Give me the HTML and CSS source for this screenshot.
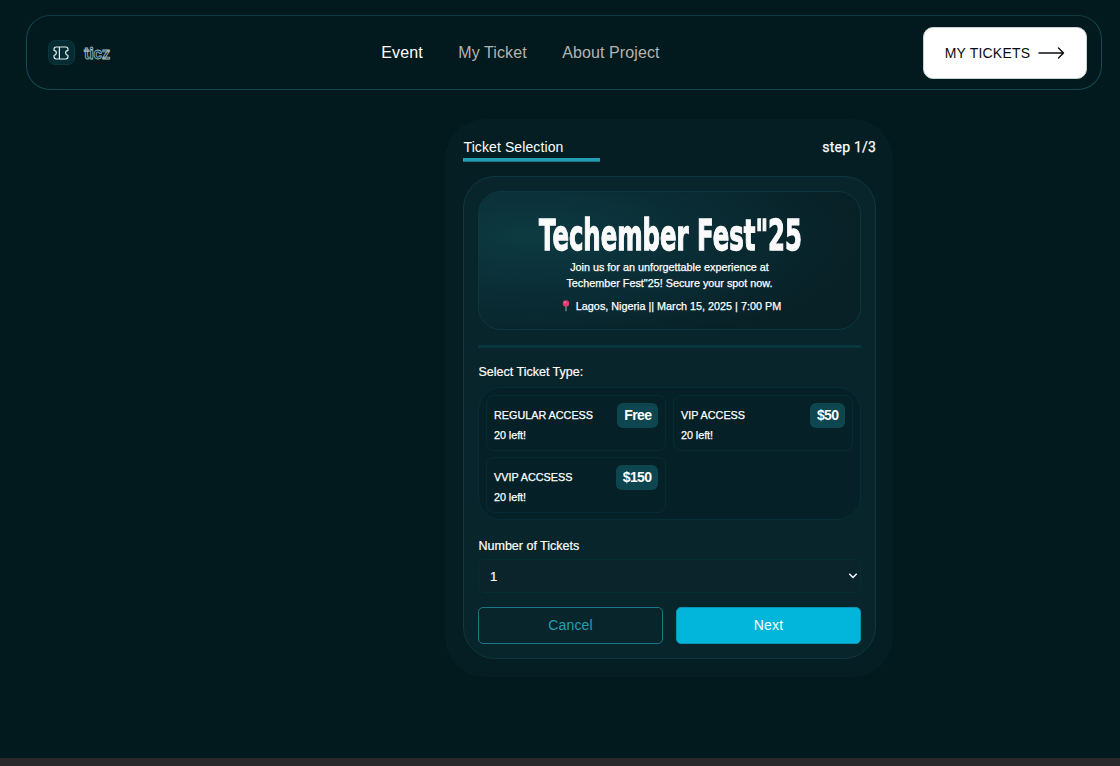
FILE: index.html
```html
<!DOCTYPE html>
<html lang="en">
<head>
<meta charset="utf-8">
<title>ticz</title>
<link rel="stylesheet" href="styles.css">
</head>
<body>
<div class="page">
  <header class="header">
    <div class="brand">
      <span class="brand-icon">
        <svg width="16" height="14" viewBox="0 0 16 14" fill="none" stroke="#dfeced" stroke-width="1.2" stroke-linejoin="round"><path d="M3.2 1H12.8Q15 1.1 15 3.4V4.3Q12.6 4.8 12.6 6.8T15 9.5V10.6Q15 12.9 12.8 13H3.2Q1 12.9 1 10.6V9.5Q3.4 8.8 3.4 6.8T1 4.3V3.4Q1 1.1 3.2 1ZM6.4 1V13"/></svg>
      </span>
      <svg class="brand-name" width="30" height="22"><text x="1" y="17" textLength="26" lengthAdjust="spacingAndGlyphs">ticz</text></svg>
    </div>
    <nav class="nav">
      <a class="active">Event</a>
      <a>My Ticket</a>
      <a>About Project</a>
    </nav>
    <button class="tickets-btn">
      <span>MY TICKETS</span>
      <svg width="27" height="12" viewBox="0 0 27 12" fill="none" stroke="#0a0c11" stroke-width="1.4" stroke-linecap="round" stroke-linejoin="round"><path d="M1 6H25.5M20.5 1L25.5 6L20.5 11"/></svg>
    </button>
  </header>

  <main class="panel">
    <div class="panel-head">
      <h1>Ticket Selection</h1>
      <span class="step">step 1/3</span>
    </div>
    <div class="progress"></div>
    <section class="card">
      <div class="event">
        <svg class="event-title" width="274" height="56">
          <defs><filter id="rough" x="-5%" y="-10%" width="110%" height="120%"><feTurbulence type="fractalNoise" baseFrequency="0.3" numOctaves="1" seed="4"/><feDisplacementMap in="SourceGraphic" scale="1.6" xChannelSelector="R" yChannelSelector="G"/></filter></defs>
          <text x="6" y="42.5" textLength="263" lengthAdjust="spacingAndGlyphs" filter="url(#rough)">Techember Fest"25</text>
        </svg>
        <p class="event-copy">Join us for an unforgettable experience at<br>Techember Fest"25! Secure your spot now.</p>
        <p class="event-meta">
          <svg width="8" height="12" viewBox="0 0 8 12"><path d="M4 5V11.3" stroke="#8fa0a6" stroke-width="1.1"/><circle cx="4" cy="3.4" r="3.2" fill="#e8386c"/><circle cx="3" cy="2.4" r=".9" fill="#ff8aa8"/></svg>
          <span>Lagos, Nigeria || March 15, 2025 | 7:00 PM</span>
        </p>
      </div>
      <div class="divider"></div>
      <div class="label label-type">Select Ticket Type:</div>
      <div class="types">
        <div class="type"><div class="type-text"><span>REGULAR ACCESS</span><span class="left">20 left!</span></div><b>Free</b></div>
        <div class="type"><div class="type-text"><span>VIP ACCESS</span><span class="left">20 left!</span></div><b>$50</b></div>
        <div class="type"><div class="type-text"><span>VVIP ACCSESS</span><span class="left">20 left!</span></div><b>$150</b></div>
      </div>
      <div class="label label-count">Number of Tickets</div>
      <div class="select">
        <span>1</span>
        <svg width="10" height="6" viewBox="0 0 10 6" fill="none" stroke="#fff" stroke-width="1.4"><path d="M1.3 .8L5 4.5L8.7 .8"/></svg>
      </div>
      <div class="actions">
        <button class="cancel">Cancel</button>
        <button class="next">Next</button>
      </div>
    </section>
  </main>
</div>
<div class="bottom-bar"></div>
</body>
</html>
```
FILE: styles.css
```css
* { box-sizing: border-box; }
body {
  margin: 0;
  height: 766px;
  display: flex;
  flex-direction: column;
  overflow: hidden;
  background: #02191d;
  color: #fff;
  font-family: "Liberation Sans", Arial, sans-serif;
}
button { font-family: inherit; margin: 0; }
p, h1 { margin: 0; font-weight: 400; }
svg { display: block; flex: none; overflow: visible; }
.page { height: 758px; padding: 15px 18px 0 26px; }
.bottom-bar { height: 8px; background: #29292b; }

.header {
  height: 75px;
  border: 1px solid #134a54;
  border-top-color: #0e3b44;
  border-radius: 24px;
  padding: 0 14px 0 21px;
  display: grid;
  grid-template-columns: 333px 1fr 164px;
  align-items: center;
}
.brand { display: flex; align-items: center; gap: 8px; }
.brand-icon {
  width: 27px;
  height: 25px;
  border-radius: 7px;
  border: 1px solid #0a363e;
  background: #052c33;
  display: flex;
  align-items: center;
  justify-content: center;
  padding-right: 1px;
}
.brand-name text {
  font: 700 17px "Roboto", sans-serif;
  fill: #06252b;
  stroke: #a9bec1;
  stroke-width: .8px;
}
.nav { display: flex; gap: 35.5px; font-size: 16px; line-height: 20px; letter-spacing: .1px; padding-left: .3px; }
.nav a { color: #b3b3b3; white-space: nowrap; }
.nav .active { color: #fff; }
.tickets-btn {
  width: 164px;
  height: 52px;
  border: 1px solid #c9d2d3;
  border-radius: 10px;
  background: #fff;
  color: #0a0c11;
  font-size: 14px;
  letter-spacing: .2px;
  padding: 0;
  display: flex;
  align-items: center;
  justify-content: center;
  gap: 8px;
}

.panel {
  width: 448px;
  height: 558px;
  margin: 29px 0 0 419px;
  padding: 18px 17px 18px 18px;
  border-radius: 40px;
  background: #041e23;
}
.panel-head { display: flex; justify-content: space-between; line-height: 20px; height: 20px; }
.panel-head h1 { font-size: 14px; letter-spacing: .1px; padding-left: .5px; }
.step { font: 400 14px/20px "Roboto", sans-serif; letter-spacing: .2px; -webkit-text-stroke: .25px #fff; }
.progress { width: 137px; height: 4px; margin-top: 1px; background: linear-gradient(#24a0b5 75%, #167684 75%); }
.card {
  width: 413px;
  height: 483px;
  margin-top: 14px;
  padding: 14px;
  border: 1px solid #0e3740;
  border-radius: 32px;
  background: #08252b;
}
.event {
  height: 139px;
  border: 1px solid #0b3840;
  border-radius: 23px;
  background: radial-gradient(85% 85% at 14% 32%, #0d3a42 0%, #0a2d35 50%, #08212700 100%), #082127;
  display: flex;
  flex-direction: column;
  align-items: center;
  padding-top: 15px;
}
.event-title text {
  font: 700 43px "DejaVu Sans", Verdana, sans-serif;
  fill: #fafafa;
  stroke: #fafafa;
  stroke-width: 1.4px;
}
.event-copy { font-size: 10.8px; line-height: 16px; text-align: center; margin-top: -4px; -webkit-text-stroke: .25px #fff; }
.event-meta { display: flex; align-items: center; gap: 6px; font-size: 10.8px; line-height: 14px; margin: 8px 0 0 4px; -webkit-text-stroke: .25px #fff; }
.divider { height: 3px; margin-top: 15px; background: #07363e; }
.label { line-height: 16px; white-space: nowrap; padding-left: .5px; -webkit-text-stroke: .2px #fff; }
.label-type { font-size: 12.5px; margin-top: 16px; }
.label-count { font-size: 12.5px; margin-top: 18px; }
.types {
  height: 133px;
  margin-top: 7px;
  padding: 7px;
  border: 1px solid #062e36;
  border-radius: 23px;
  background: #052127;
  display: grid;
  grid-template-columns: 180px 180px;
  grid-template-rows: 56px 56px;
  gap: 6px 7px;
}
.type {
  border: 1px solid #072b32;
  border-radius: 8px;
  padding: 7px;
  display: flex;
  justify-content: space-between;
  align-items: flex-start;
}
.type-text { display: flex; flex-direction: column; font-size: 10.8px; line-height: 20px; padding-top: 2px; white-space: nowrap; -webkit-text-stroke: .25px #fff; }
.left { letter-spacing: -.05px; }
.type b {
  height: 25px;
  padding: 0 6.5px 0 7px;
  border-radius: 6px;
  background: #0e464f;
  font: 700 14px/25px "Liberation Sans", Arial, sans-serif;
  letter-spacing: -.6px;
}
.select {
  height: 34px;
  margin-top: 5px;
  padding: 0 2px 0 11px;
  border: 1px solid #072d34;
  border-radius: 6px;
  background: #0b242b;
  display: flex;
  align-items: center;
  justify-content: space-between;
  font-size: 13px;
  -webkit-text-stroke: .2px #fff;
}
.actions { display: grid; grid-template-columns: 185px 185px; gap: 13px; margin-top: 14px; }
.actions button { height: 37px; border-radius: 5px; border: 1px solid #1c7685; font-size: 14px; letter-spacing: .15px; padding: 0 0 2px; }
.cancel { background: transparent; color: #249fb3; }
.actions .next { background: #02b5db; border-color: #0596b3; color: #fff; }
```
